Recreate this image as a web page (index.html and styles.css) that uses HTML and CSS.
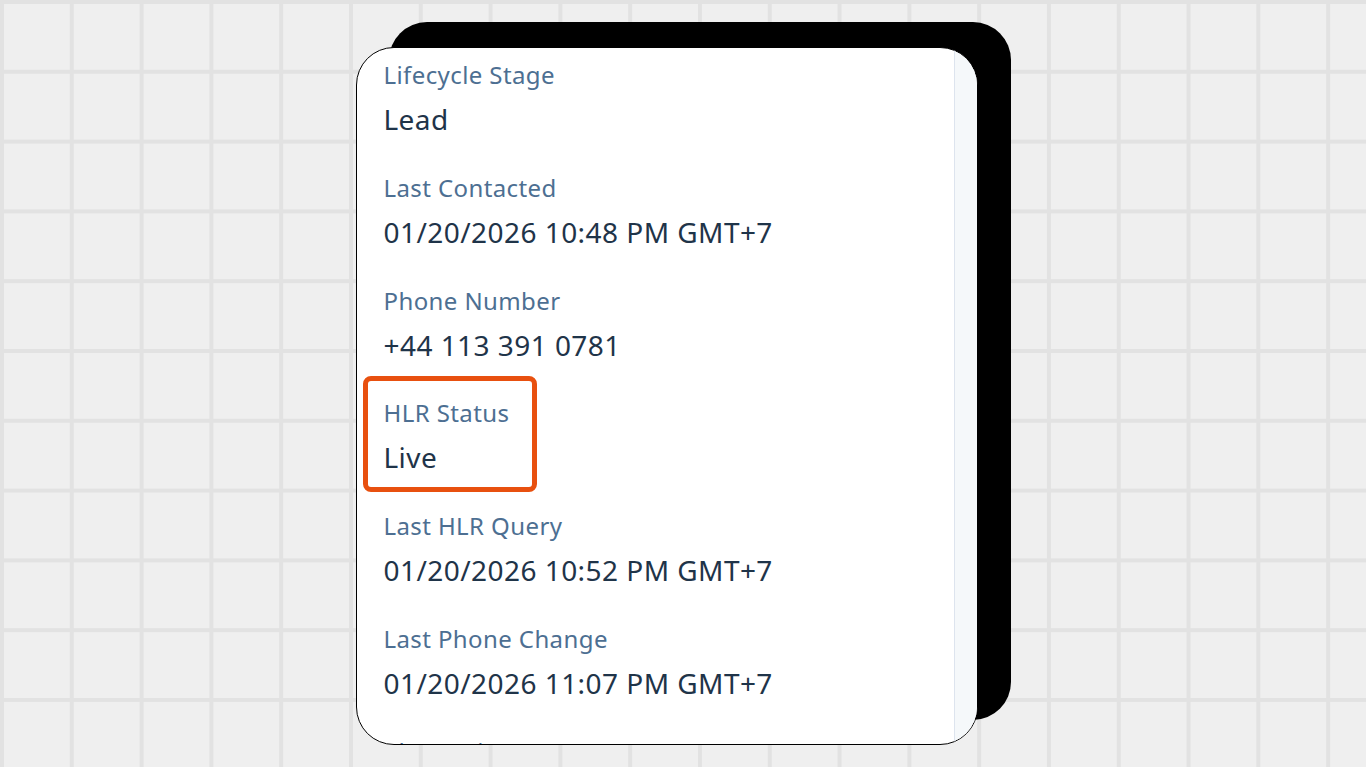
FILE: index.html
```html
<!DOCTYPE html>
<html lang="en">
<head>
<meta charset="utf-8">
<title>Contact properties</title>
<link rel="stylesheet" href="styles.css">
</head>
<body>
<main class="stage">
  <section class="card">
    <div class="props">
      <div class="prop">
        <div class="prop-label">Lifecycle Stage</div>
        <div class="prop-value">Lead</div>
      </div>
      <div class="prop">
        <div class="prop-label">Last Contacted</div>
        <div class="prop-value">01/20/2026 10:48 PM GMT+7</div>
      </div>
      <div class="prop">
        <div class="prop-label">Phone Number</div>
        <div class="prop-value">+44 113 391 0781</div>
      </div>
      <div class="prop prop-highlight">
        <div class="prop-label">HLR Status</div>
        <div class="prop-value">Live</div>
      </div>
      <div class="prop">
        <div class="prop-label">Last HLR Query</div>
        <div class="prop-value">01/20/2026 10:52 PM GMT+7</div>
      </div>
      <div class="prop">
        <div class="prop-label">Last Phone Change</div>
        <div class="prop-value">01/20/2026 11:07 PM GMT+7</div>
      </div>
      <div class="prop">
        <div class="prop-label">Phone Line Type</div>
        <div class="prop-value">Mobile</div>
      </div>
    </div>
    <div class="scrolltrack"></div>
  </section>
</main>
</body>
</html>
```
FILE: styles.css
```css
html, body {
  margin: 0;
  padding: 0;
  height: 100%;
}
body {
  background-color: #efefef;
  background-image:
    linear-gradient(to right, #e2e2e2 4.3px, transparent 4.3px),
    linear-gradient(to bottom, #e2e2e2 4.3px, transparent 4.3px);
  background-size: 69.8px 69.8px;
  font-family: "Noto Sans", "Open Sans", sans-serif;
  overflow: hidden;
}
.stage {
  height: 767px;
  display: flex;
  align-items: center;
  justify-content: center;
}
.card {
  box-sizing: border-box;
  width: 622px;
  height: 698px;
  margin-top: 25px;
  margin-right: 33px;
  background: #ffffff;
  border: 1.5px solid #000000;
  border-radius: 38px;
  box-shadow: 33px -25px 0 0 #000000;
  overflow: hidden;
  display: flex;
}
.props {
  flex: 1;
  padding: 11px 0 0 27px;
  display: flex;
  flex-direction: column;
  gap: 32.8px;
}
.prop {
  position: relative;
  align-self: flex-start;
}
.prop-label {
  font-size: 24px;
  line-height: 32px;
  color: #4d6f92;
  letter-spacing: 0.4px;
}
.prop-value {
  margin-top: 8px;
  font-size: 28px;
  line-height: 40px;
  color: #1f3449;
  letter-spacing: 0.45px;
}
.prop-highlight::after {
  content: "";
  position: absolute;
  left: -21px;
  top: -21px;
  width: 174px;
  height: 116px;
  box-sizing: border-box;
  border: 5px solid #e8500f;
  border-radius: 8px;
}
.scrolltrack {
  width: 22px;
  background: #f5f8fa;
  border-left: 1.5px solid #dde4ee;
}
```
